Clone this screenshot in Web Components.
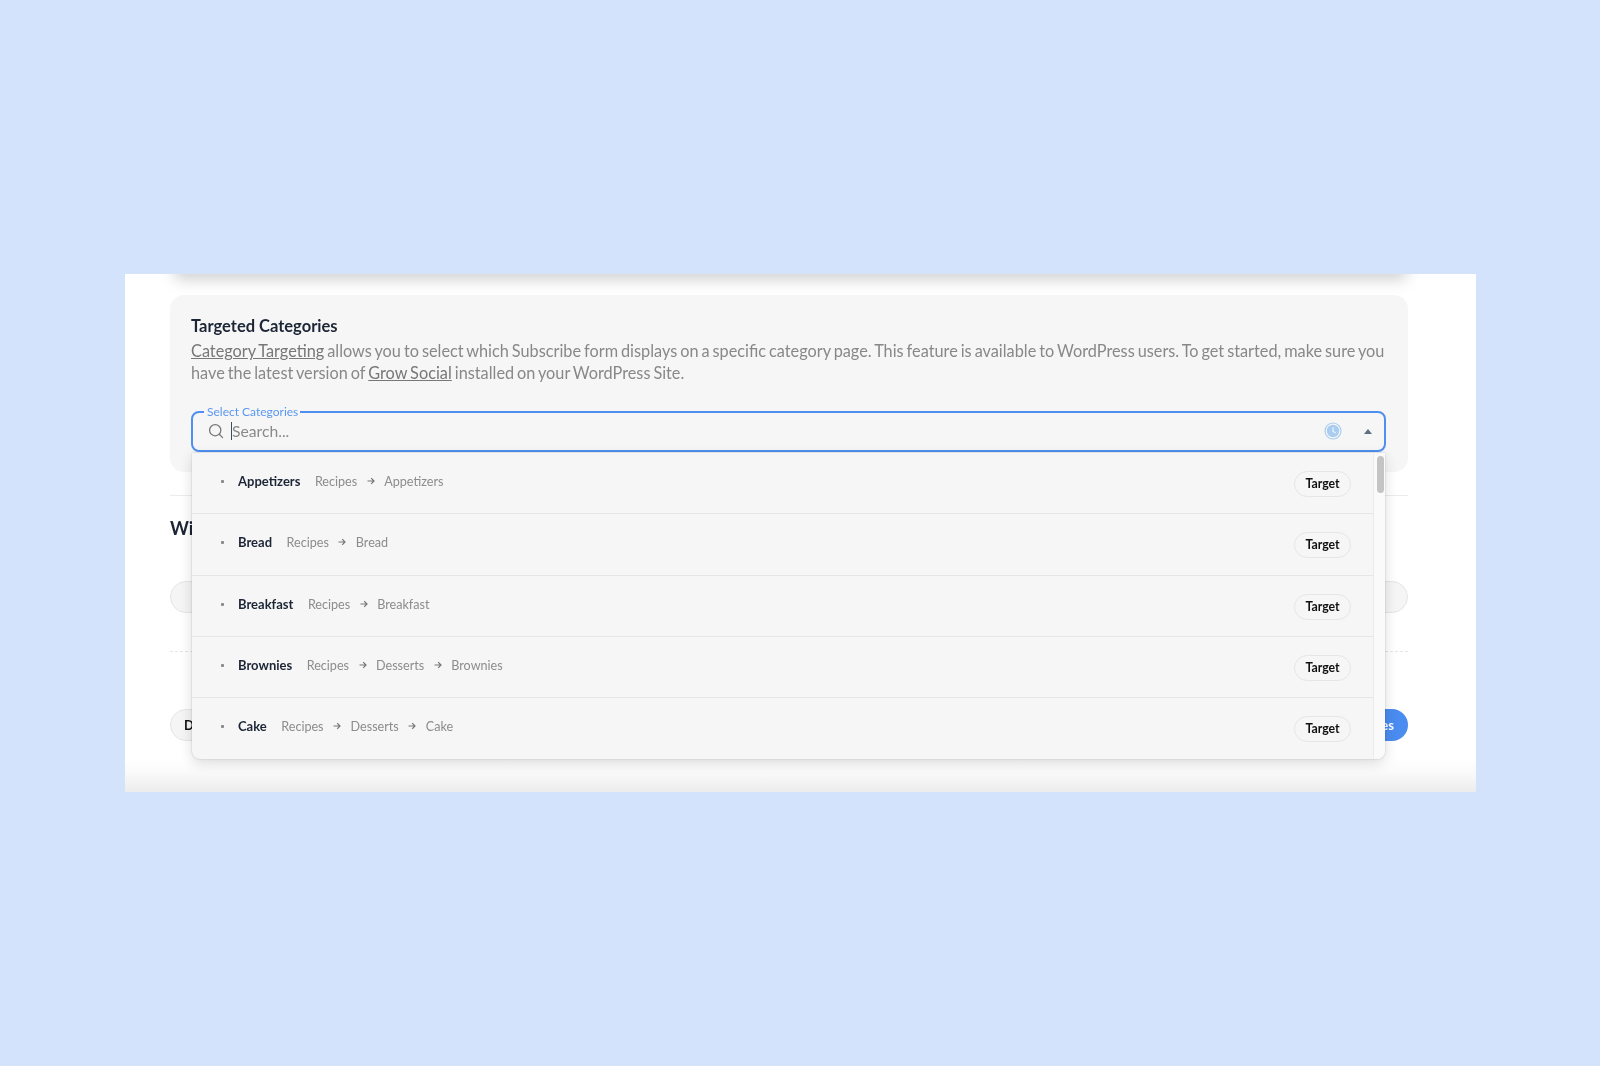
<!DOCTYPE html>
<html lang="en">
<head>
<meta charset="utf-8">
<title>Targeted Categories</title>
<style>
html,body{margin:0;height:100%}
body{background:#d3e3fc;font-family:Lato,"Liberation Sans",sans-serif;overflow:hidden}
</style>
</head>
<body>
<settings-stage>
  <targeted-card>
    <category-select>
      <category-row name="Appetizers" path="Recipes|Appetizers"></category-row>
      <category-row name="Bread" path="Recipes|Bread"></category-row>
      <category-row name="Breakfast" path="Recipes|Breakfast"></category-row>
      <category-row name="Brownies" path="Recipes|Desserts|Brownies"></category-row>
      <category-row name="Cake" path="Recipes|Desserts|Cake"></category-row>
    </category-select>
  </targeted-card>
</settings-stage>
<script>
function def(name, html, setup){
  customElements.define(name, class extends HTMLElement{
    constructor(){super();this.attachShadow({mode:'open'}).innerHTML=html;}
    connectedCallback(){if(setup)setup(this);}
  });
}
def('settings-stage', `<style>
:host{display:block;padding:274px 124px 0 125px;height:792px;box-sizing:border-box}
.panel{position:relative;overflow:hidden;height:518px;box-sizing:border-box;padding:21px 68px 0 45px;
 background:linear-gradient(to top,#ececec 0,#fafafa 20px,#fff 34px);filter:blur(.35px)}
.panel::before{content:"";position:absolute;left:52px;right:72px;top:-16px;height:16px;background:#ddd;box-shadow:0 3px 16px 2px rgba(0,0,0,.2)}
.rule{height:1px;background:#ececec;margin-top:23px}
h2{margin:20px 0 0;font:700 18px/24px Lato,sans-serif;color:#1c2536}
.pill{height:32px;box-sizing:border-box;margin-top:41px;border:1px solid #e6e6e6;border-radius:16px;background:#f5f5f5}
.dash{border-top:1px dashed #e6e6e6;margin-top:38px}
.foot{display:flex;justify-content:space-between;margin-top:57px}
.btn{height:32px;box-sizing:border-box;border-radius:16px;font:700 13px/30px Lato,sans-serif;width:120px}
.d{border:1px solid #e6e6e6;background:#f5f5f5;color:#111;padding-left:13px}
.s{background:#4a8cf0;color:#fff;text-align:right;padding-right:14px;line-height:32px}
</style>
<div class="panel">
  <slot></slot>
  <div class="rule"></div>
  <h2>Wi</h2>
  <div class="pill"></div>
  <div class="dash"></div>
  <div class="foot"><div class="btn d">D</div><div class="btn s">es</div></div>
</div>`);
def('targeted-card', `<style>
:host{display:block;background:#f6f6f6;border-radius:14px;padding:20px 22px 21px 21px;height:177px;box-sizing:border-box;color:#888}
h3{margin:0;font:700 16.5px/22px Lato,sans-serif;color:#1c2536}
p{margin:3px 0 27.8px;font:400 16.3px/21.6px Lato,sans-serif;word-spacing:-1.2px;color:#888;white-space:nowrap}
a{color:#777;text-decoration:underline}
</style>
<h3>Targeted Categories</h3>
<p><a>Category Targeting</a> allows you to select which Subscribe form displays on a specific category page. This feature is available to WordPress users. To get started, make sure you<br>have the latest version of <a>Grow Social</a> installed on your WordPress Site.</p>
<slot></slot>`);
def('category-select', `<style>
:host{display:block;position:relative;height:41px}
.box{height:41px;box-sizing:border-box;border:2px solid #4e8ff0;border-radius:8px;display:flex;align-items:center;padding:0 12px 0 15px;background:#f6f6f6}
.legend{position:absolute;left:13px;top:-6px;padding:0 2px 0 3px;background:linear-gradient(#f6f6f6,#f6f6f6);font:400 12px/14px Lato,sans-serif;color:#5a97f2}
.search{display:flex;flex:none;margin-right:7px}
.caret{width:1px;height:18px;background:#3f4a5a;flex:none}
.ph{flex:1;font:400 15.7px/22px Lato,sans-serif;color:#8a8a8a}
.clock{display:flex;margin-right:22px}
.arrow{width:0;height:0;border:4.5px solid transparent;border-top:0;border-bottom:5px solid #5f6f82}
.drop{position:absolute;left:1px;right:1px;top:42px;height:306px;display:flex;background:#f6f6f6;border-radius:0 0 8px 8px;
 box-shadow:0 0 2px rgba(0,0,0,.2),0 4px 14px rgba(0,0,0,.14);overflow:hidden}
.list{flex:1;min-width:0}
.track{width:12px;box-sizing:border-box;background:#fafafa;border-left:1px solid #ebebeb;padding:3px 2px 0 3px}
.thumb{height:37px;width:7px;background:#c4c4c4;border-radius:4px}
</style>
<div class="box">
  <span class="legend">Select Categories</span>
  <span class="search"><svg width="16" height="16" viewBox="0 0 16 16" fill="none" stroke="#777" stroke-width="1.3"><circle cx="7.2" cy="7.2" r="5.6"/><path d="M11.3 11.3 14.6 14.6" stroke-linecap="round"/></svg></span>
  <span class="caret"></span>
  <span class="ph">Search...</span>
  <span class="clock"><svg width="18" height="18" viewBox="0 0 18 18"><circle cx="9" cy="9" r="8" fill="none" stroke="#a9cdf0" stroke-width="1.2"/><circle cx="9" cy="9" r="6.2" fill="#a9cdf0"/><path d="M9 5.2V9.3L11.8 11" fill="none" stroke="#e6f0fb" stroke-width="1.3"/></svg></span>
  <span class="arrow"></span>
</div>
<div class="drop"><div class="list"><slot></slot></div><div class="track"><div class="thumb"></div></div></div>`);
def('target-button', `<style>
:host{display:block;width:57px;height:26px;box-sizing:border-box;border:1px solid #e6e6e6;border-radius:13px;text-align:center;font:700 12.3px/24px Lato,sans-serif;color:#111}
</style><slot></slot>`);
def('category-row', `<style>
:host{display:block;height:61.3px;box-sizing:border-box;border-bottom:1px solid #e6e6e6}
:host(:last-child){border-bottom:0}
.r{display:flex;align-items:flex-start;height:100%;padding-left:29px;padding-right:22px;box-sizing:border-box}
.dot{width:3px;height:3px;background:#888;border-radius:1px;margin-top:27px;margin-right:14px;flex:none}
.t{display:flex;align-items:baseline;height:18px;margin-top:19px;font:400 12.6px/18px Lato,sans-serif;color:#8c8c8c;flex:1}
b{font-weight:700;font-size:13px;color:#1c2536;margin-right:14.5px}
svg{margin:0 9.5px;flex:none;align-self:center}
target-button{margin-top:18px}
</style>
<div class="r"><span class="dot"></span><span class="t"></span><target-button>Target</target-button></div>`,
function(el){
  const t=el.shadowRoot.querySelector('.t');
  if(t.childNodes.length)return;
  const n=document.createElement('b');n.textContent=el.getAttribute('name');t.append(n);
  el.getAttribute('path').split('|').forEach((p,i)=>{
    if(i){t.insertAdjacentHTML('beforeend','<svg width="8" height="8" viewBox="0 0 8 8" fill="none" stroke="#777" stroke-width="1.2"><path d="M.5 4H7M4.2 1.2 7 4 4.2 6.8"/></svg>');}
    const s=document.createElement('span');s.textContent=p;t.append(s);
  });
});
</script>
</body>
</html>
